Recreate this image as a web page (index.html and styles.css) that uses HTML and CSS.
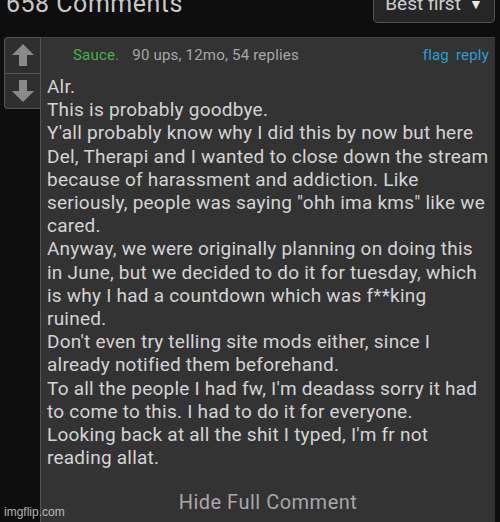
FILE: index.html
```html
<!DOCTYPE html>
<html lang="en">
<head>
    <meta charset="UTF-8">
    <meta name="viewport" content="width=device-width, initial-scale=1.0">
    <title>658 Comments</title>
    <link rel="stylesheet" href="styles.css">
</head>
<body>

<div class="comments-head">
    <div class="comments-title">658 Comments</div>
    <div class="sort-btn">Best first <span class="sort-arrow">&#9660;</span></div>
</div>

<div class="comment">
    <div class="votes">
        <div class="vote">
            <svg width="24" height="24" viewBox="0 0 24 24"><path d="M12 1 L23 12 L16 12 L16 23 L8 23 L8 12 L1 12 Z" fill="#8a8a8a"/></svg>
        </div>
        <div class="vote">
            <svg width="24" height="24" viewBox="0 0 24 24"><path d="M12 23 L23 12 L16 12 L16 1 L8 1 L8 12 L1 12 Z" fill="#8a8a8a"/></svg>
        </div>
    </div>
    <div class="comment-box">
        <div class="meta">
            <span class="user">Sauce.</span>
            <span class="stats">90 ups, 12mo, 54 replies</span>
            <span class="actions"><a>flag</a> <a>reply</a></span>
        </div>
        <div class="body">Alr.<br>
This is probably goodbye.<br>
Y'all probably know why I did this by now but here<br>
Del, Therapi and I wanted to close down the stream<br>
because of harassment and addiction. Like<br>
seriously, people was saying "ohh ima kms" like we<br>
cared.<br>
Anyway, we were originally planning on doing this<br>
in June, but we decided to do it for tuesday, which<br>
is why I had a countdown which was f**king<br>
ruined.<br>
Don't even try telling site mods either, since I<br>
already notified them beforehand.<br>
To all the people I had fw, I'm deadass sorry it had<br>
to come to this. I had to do it for everyone.<br>
Looking back at all the shit I typed, I'm fr not<br>
reading allat.</div>
        <div class="hide-full">Hide Full Comment</div>
    </div>
</div>

<div class="watermark">imgflip.com</div>

</body>
</html>
```

FILE: styles.css
```css
body {
    margin: 0;
    background: #0e0e0e;
    font-family: Roboto, "Noto Sans", sans-serif;
    color: #d2d2d2;
    height: 522px;
    overflow: hidden;
    position: relative;
}
.comments-head {
    display: flex;
    justify-content: space-between;
    align-items: flex-end;
    height: 23px;
    padding: 0 5px 0 6px;
    margin-bottom: 14px;
}
.comments-title {
    font-size: 25px;
    letter-spacing: 0.5px;
    color: #c8c8c8;
    line-height: 1;
    margin-bottom: 7px;
}
.sort-btn {
    width: 122px;
    height: 34px;
    box-sizing: border-box;
    border: 1px solid #555;
    border-top: none;
    border-radius: 0 0 5px 5px;
    background: #262626;
    font-size: 19px;
    color: #cfcfcf;
    display: flex;
    align-items: flex-end;
    justify-content: center;
    padding-bottom: 7px;
    gap: 8px;
}
.sort-arrow {
    font-size: 14px;
    color: #e8e8e8;
    margin-bottom: 3px;
}
.comment {
    display: flex;
    padding: 0 5px 0 4px;
}
.votes {
    width: 36px;
    height: 72px;
    box-sizing: border-box;
    border: 1px solid #555;
    border-right: none;
    border-radius: 4px 0 0 4px;
    background: #2f2f2f;
    display: flex;
    flex-direction: column;
}
.vote {
    flex: 1;
    display: flex;
    align-items: center;
    justify-content: center;
}
.vote + .vote {
    border-top: 1px solid #555;
}
.comment-box {
    flex: 1;
    background: #333333;
    border-left: 1px solid #555;
    border-top: 1px solid #444;
    padding: 6px 6px 0 6px;
    height: 500px;
}
.meta {
    display: flex;
    align-items: center;
    font-size: 15px;
    letter-spacing: 0.2px;
    height: 22px;
    padding-left: 26px;
}
.user {
    color: #4caf50;
}
.stats {
    color: #a8a8a8;
    margin-left: 13px;
}
.actions {
    margin-left: auto;
    color: #2ba0d0;
}
.actions a {
    margin-left: 3px;
}
.body {
    font-size: 19px;
    letter-spacing: 0.23px;
    line-height: 23.2px;
    margin-top: 9px;
    color: #d4d4d4;
    white-space: nowrap;
}
.hide-full {
    text-align: center;
    font-size: 20px;
    letter-spacing: 0.5px;
    color: #a8a8a8;
    margin-top: 21px;
}
.watermark {
    position: absolute;
    left: 4px;
    bottom: 3px;
    font-size: 12px;
    color: rgba(230, 230, 230, 0.75);
    font-family: "Liberation Sans", Arial, sans-serif;
}
```
